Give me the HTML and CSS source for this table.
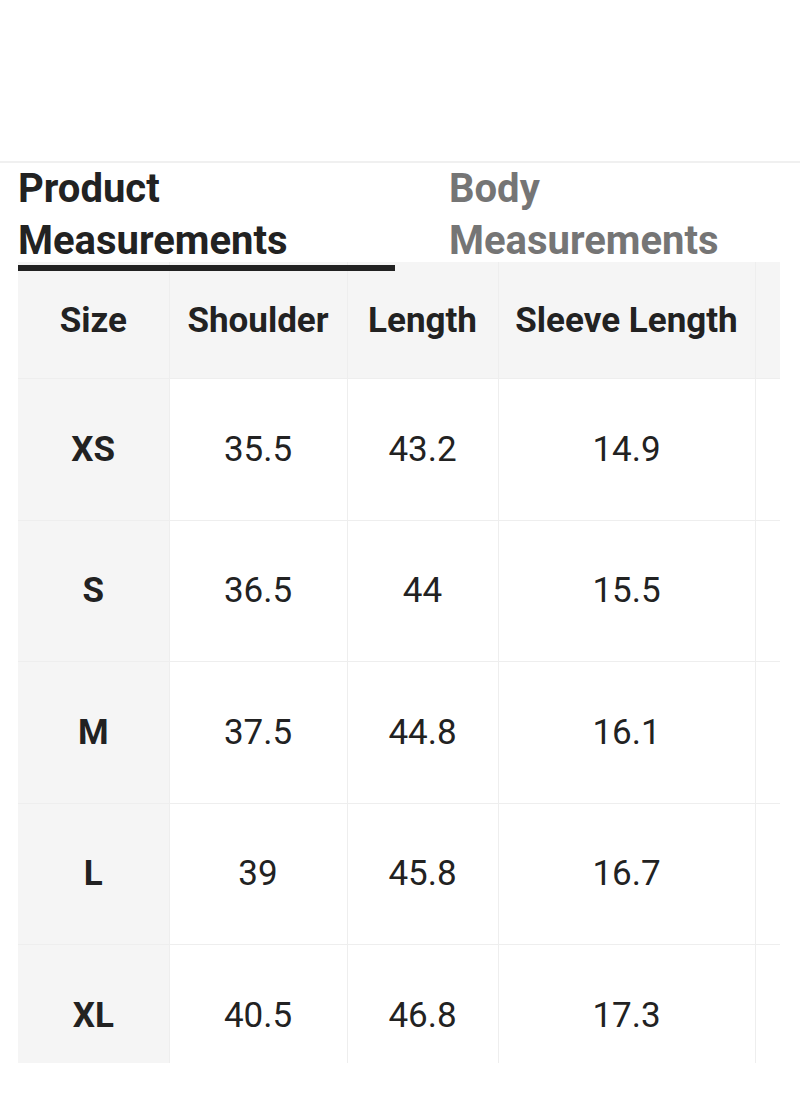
FILE: index.html
```html
<!DOCTYPE html>
<html>
<head>
<meta charset="utf-8">
<link rel="stylesheet" href="styles.css">
</head>
<body>
<div class="top-space"></div>
<section class="size-guide">
  <div class="tabs">
    <div class="tab active">Product<br>Measurements</div>
    <div class="tab">Body<br>Measurements</div>
  </div>
  <div class="table-wrap">
    <table class="size-table">
      <colgroup>
        <col class="c1"><col class="c2"><col class="c3"><col class="c4"><col class="c5">
      </colgroup>
      <thead>
        <tr><th>Size</th><th>Shoulder</th><th>Length</th><th>Sleeve Length</th><th></th></tr>
      </thead>
      <tbody>
        <tr><th>XS</th><td>35.5</td><td>43.2</td><td>14.9</td><td></td></tr>
        <tr><th>S</th><td>36.5</td><td>44</td><td>15.5</td><td></td></tr>
        <tr><th>M</th><td>37.5</td><td>44.8</td><td>16.1</td><td></td></tr>
        <tr><th>L</th><td>39</td><td>45.8</td><td>16.7</td><td></td></tr>
        <tr><th>XL</th><td>40.5</td><td>46.8</td><td>17.3</td><td></td></tr>
      </tbody>
    </table>
  </div>
</section>
</body>
</html>
```

FILE: styles.css
```css
html, body {
  margin: 0;
  padding: 0;
  background: #fff;
  font-family: Roboto, "Liberation Sans", Arial, sans-serif;
  color: #222;
}
.top-space {
  height: 161px;
}
.size-guide {
  border-top: 2px solid #f0f0f0;
  padding-left: 18px;
}
.tabs {
  position: relative;
  display: flex;
  height: 99px;
}
.tab {
  font-size: 40px;
  font-weight: 700;
  line-height: 52px;
  color: #757575;
  white-space: nowrap;
}
.tab:first-child {
  width: 431px;
}
.tab.active {
  color: #222;
  position: relative;
}
.tab.active::after {
  content: "";
  position: absolute;
  left: 0;
  top: 102px;
  width: 377px;
  height: 6px;
  background: #222;
  z-index: 2;
}
.table-wrap {
  width: 762px;
  height: 801px;
  overflow: hidden;
}
.size-table {
  border-collapse: collapse;
  table-layout: fixed;
  width: 937px;
}
.c1 { width: 151px; }
.c2 { width: 178px; }
.c3 { width: 151px; }
.c4 { width: 257px; }
.c5 { width: 200px; }
.size-table th,
.size-table td {
  border: 1px solid #eeeeee;
  text-align: center;
  padding: 0;
  font-size: 35px;
  color: #222;
}
.size-table thead th {
  height: 116px;
  background: #f5f5f5;
  font-weight: 700;
}
.size-table tbody th {
  background: #f5f5f5;
  font-weight: 700;
}
.size-table tbody td {
  font-weight: 400;
}
.size-table tbody tr {
  height: 141.5px;
}
.size-table tr > :first-child {
  border-left: none;
}
.size-table thead th {
  border-top: none;
}
```
